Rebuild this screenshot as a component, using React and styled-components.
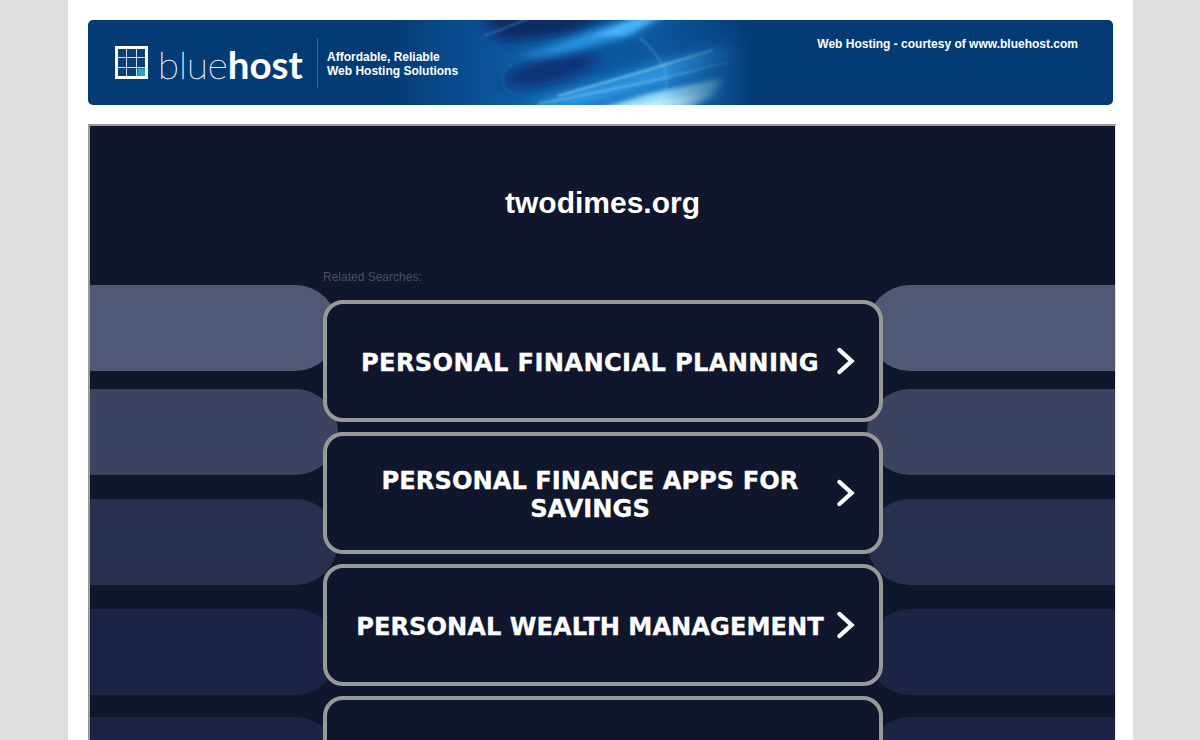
import React from "react";
import styled, { createGlobalStyle } from "styled-components";

const searches = [
  { label: "PERSONAL FINANCIAL PLANNING", tracking: 0.33 },
  { label: "PERSONAL FINANCE APPS FOR SAVINGS", tracking: 0 },
  { label: "PERSONAL WEALTH MANAGEMENT", tracking: 0 },
  { label: "", tracking: 0 },
];
const stripes = [
  { gap: 18, color: "#4f5874" },
  { gap: 24, color: "#3c4360" },
  { gap: 24, color: "#282f4f" },
  { gap: 22, color: "#1b2444" },
  { gap: 0, color: "#1b2444" },
];

const App = () => {
  return (
    <Page>
      <GlobalStyle />
      <Sheet>
        <Banner>
          <Swoosh />
          <Brand>
            <LogoMark />
            <LogoText>
              blue<b>host</b>
            </LogoText>
          </Brand>
          <Tagline>
            Affordable, Reliable
            <br />
            Web Hosting Solutions
          </Tagline>
          <Courtesy>Web Hosting - courtesy of www.bluehost.com</Courtesy>
        </Banner>
        <Frame>
          <Stripes $side="left">
            {stripes.map((s, i) => (
              <Stripe key={i} $side="left" $color={s.color} $gap={s.gap} />
            ))}
          </Stripes>
          <Stripes $side="right">
            {stripes.map((s, i) => (
              <Stripe key={i} $side="right" $color={s.color} $gap={s.gap} />
            ))}
          </Stripes>
          <Domain>twodimes.org</Domain>
          <Related>Related Searches:</Related>
          <CardList>
            {searches.map((s, i) => (
              <Card key={i} href="#">
                <CardLabel $tracking={s.tracking}>{s.label}</CardLabel>
                <Chevron />
              </Card>
            ))}
          </CardList>
        </Frame>
      </Sheet>
    </Page>
  );
};

const Swoosh = () => (
  <SwooshSvg viewBox="0 0 1025 85" preserveAspectRatio="none">
    <defs>
      <filter id="blur-lg" filterUnits="userSpaceOnUse" x="250" y="-60" width="500" height="205">
        <feGaussianBlur stdDeviation="16 10" />
      </filter>
      <filter id="blur-md" filterUnits="userSpaceOnUse" x="250" y="-60" width="500" height="205">
        <feGaussianBlur stdDeviation="9 4.5" />
      </filter>
      <filter id="blur-sm" filterUnits="userSpaceOnUse" x="250" y="-60" width="500" height="205">
        <feGaussianBlur stdDeviation="4 2" />
      </filter>
      <filter id="blur-xs" filterUnits="userSpaceOnUse" x="250" y="-60" width="500" height="205">
        <feGaussianBlur stdDeviation="1.6 0.9" />
      </filter>
      <linearGradient id="edge-fade" x1="0" x2="1" y1="0" y2="0">
        <stop offset="0" stopColor="#fff" stopOpacity="0" />
        <stop offset="0.3" stopColor="#fff" />
        <stop offset="0.75" stopColor="#fff" />
        <stop offset="1" stopColor="#fff" stopOpacity="0" />
      </linearGradient>
      <mask id="edges" maskUnits="userSpaceOnUse" x="0" y="0" width="1025" height="85">
        <rect x="300" y="0" width="365" height="85" fill="url(#edge-fade)" />
      </mask>
    </defs>
    <g mask="url(#edges)">
      <rect x="280" y="-10" width="400" height="105" fill="#0d569c" />
      <path d="M410 95 L670 15 L690 95 Z" fill="#1a7ccc" filter="url(#blur-lg)" />
      <path d="M395 -6 L530 -6 L480 14 L410 22 Z" fill="#072c66" filter="url(#blur-md)" />
      <ellipse cx="462" cy="50" rx="48" ry="13" fill="#093679" filter="url(#blur-md)" transform="rotate(-14 462 50)" />
      <path d="M425 40 L515 8 L575 -8 L545 14 L470 34 Z" fill="#2f9fee" filter="url(#blur-md)" />
      <path d="M505 16 L550 -3 L572 -3 L535 16 Z" fill="#46b2f6" filter="url(#blur-sm)" />
      <path d="M396 16 L440 -1" stroke="#7cc0ec" strokeOpacity="0.55" strokeWidth="1.2" fill="none" filter="url(#blur-xs)" />
      <path d="M445 84 L560 50 L645 24 L645 36 L560 64 L485 88 Z" fill="#2f98e2" filter="url(#blur-md)" />
      <path d="M470 76 L560 50 L625 30" stroke="#a6e0f6" strokeOpacity="0.5" strokeWidth="2.6" fill="none" filter="url(#blur-xs)" />
      <path d="M450 84 L560 62 L640 42" stroke="#8ad2f2" strokeOpacity="0.5" strokeWidth="2.2" fill="none" filter="url(#blur-xs)" />
      <path d="M500 92 L560 74 L635 58 L625 76 L595 92 Z" fill="#93daf6" filter="url(#blur-sm)" />
      <path d="M520 92 L570 80 L612 74 L592 92 Z" fill="#bfeffc" filter="url(#blur-sm)" />
      <path d="M552 18 Q590 50 574 85" stroke="#8ccaec" strokeOpacity="0.45" strokeWidth="1.2" fill="none" filter="url(#blur-xs)" />
      <path d="M424 44 Q404 58 424 74" stroke="#5ea8dc" strokeOpacity="0.4" strokeWidth="1" fill="none" filter="url(#blur-xs)" />
    </g>
  </SwooshSvg>
);

const LogoMark = () => (
  <svg width="33" height="33" viewBox="0 0 33 33">
    <rect x="1.5" y="1.5" width="30" height="30" fill="#0b3e78" stroke="#fff" strokeWidth="3" />
    <rect x="22.5" y="22.5" width="7.5" height="7.5" fill="#25a5b5" />
    <path d="M11.5 3v27M21.5 3v27M3 11.5h27M3 21.5h27" stroke="#cfe0ee" strokeWidth="1" />
  </svg>
);

const Chevron = () => (
  <ChevronIcon width="20" height="28" viewBox="0 0 20 28">
    <path d="M3.5 3 L15.5 14 L3.5 25" fill="none" stroke="#fff" strokeWidth="4.4" strokeLinecap="round" />
  </ChevronIcon>
);

//Styled Components
const GlobalStyle = createGlobalStyle`
  html, body {
    margin: 0;
    padding: 0;
    height: 100%;
    overflow: hidden;
    background: #dedede;
  }
`;

const Page = styled.div`
  height: 740px;
  overflow: hidden;
  font-family: "Liberation Sans", Arial, sans-serif;
`;

const Sheet = styled.div`
  width: 1065px;
  height: 100%;
  margin-left: 68px;
  padding: 20px 17px 0 20px;
  box-sizing: border-box;
  background: #fff;
`;

const Banner = styled.div`
  position: relative;
  width: 1025px;
  height: 85px;
  display: flex;
  align-items: flex-start;
  overflow: hidden;
  border-radius: 5px;
  background: #043b75;
  color: #fff;
`;

const SwooshSvg = styled.svg`
  position: absolute;
  inset: 0;
  width: 100%;
  height: 100%;
`;

const Brand = styled.div`
  position: relative;
  width: 203px;
  height: 50px;
  margin: 18px 0 0 27px;
  padding-top: 8px;
  box-sizing: border-box;
  display: flex;
  align-items: flex-start;
  gap: 10px;
  border-right: 1px solid #2a6ba6;
`;

const LogoText = styled.span`
  font-family: Lato, "Open Sans", sans-serif;
  font-size: 38.5px;
  font-weight: 100;
  line-height: 36px;
  white-space: nowrap;
  color: #e4eef6;
  -webkit-text-stroke: 0.45px #e4eef6;
  b {
    font-weight: 700;
    color: #fff;
    -webkit-text-stroke: 0;
  }
`;

const Tagline = styled.div`
  position: relative;
  margin: 30px 0 0 9px;
  font-size: 12px;
  font-weight: 700;
  line-height: 14px;
`;

const Courtesy = styled.div`
  position: absolute;
  top: 17px;
  right: 35px;
  font-size: 12px;
  font-weight: 700;
  line-height: 14px;
`;

const Frame = styled.div`
  position: relative;
  width: 1028px;
  height: 640px;
  margin-top: 19px;
  box-sizing: border-box;
  overflow: hidden;
  border-top: 2px solid #999;
  border-left: 2px solid #999;
  border-right: 1px solid #e4e4e8;
  background: #10162b;
`;

const Stripes = styled.div`
  position: absolute;
  top: 159px;
  ${(p) => (p.$side === "left" ? "left: 0;" : "right: 0;")}
  width: 248px;
  display: flex;
  flex-direction: column;
`;

const Stripe = styled.div`
  height: 86px;
  margin-bottom: ${(p) => p.$gap}px;
  background: ${(p) => p.$color};
  border-radius: ${(p) => (p.$side === "left" ? "0 43px 43px 0" : "43px 0 0 43px")};
`;

const Domain = styled.h1`
  position: relative;
  width: 1025px;
  margin: 0;
  padding-top: 59px;
  font-size: 30px;
  line-height: 36px;
  font-weight: 700;
  text-align: center;
  color: #fff;
`;

const Related = styled.div`
  position: relative;
  margin: 48px 0 0 233px;
  font-size: 12px;
  line-height: 16px;
  color: #4a4e66;
`;

const CardList = styled.div`
  position: relative;
  width: 560px;
  margin: 15px 0 0 233px;
  display: flex;
  flex-direction: column;
  gap: 10px;
`;

const Card = styled.a`
  height: 122px;
  box-sizing: border-box;
  display: flex;
  align-items: center;
  padding: 0 23px 0 17px;
  border: 4px solid #999;
  border-radius: 20px;
  background: #10162b;
  text-decoration: none;
  color: #fff;
`;

const CardLabel = styled.span`
  flex: 1;
  padding-top: 3px;
  font-family: "DejaVu Sans", Verdana, sans-serif;
  font-size: 24.2px;
  line-height: 28px;
  font-weight: 700;
  letter-spacing: ${(p) => p.$tracking}px;
  -webkit-text-stroke: 0.3px #fff;
  text-align: center;
  text-transform: uppercase;
`;

const ChevronIcon = styled.svg`
  flex: none;
`;

export default App;
